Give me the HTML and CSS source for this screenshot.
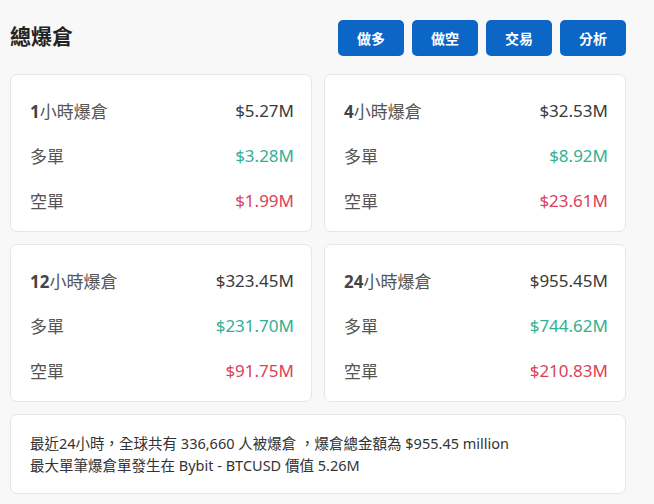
FILE: index.html
```html
<!DOCTYPE html>
<html lang="zh-Hant">
<head>
<meta charset="utf-8">
<link rel="stylesheet" href="styles.css">
</head>
<body>
<div class="page">
  <header class="head">
    <h1 class="title">總爆倉</h1>
    <nav class="actions">
      <button class="btn">做多</button>
      <button class="btn">做空</button>
      <button class="btn">交易</button>
      <button class="btn">分析</button>
    </nav>
  </header>
  <section class="grid">
    <div class="card">
      <div class="row"><span class="label"><b>1</b>小時爆倉</span><span class="val">$5.27M</span></div>
      <div class="row"><span class="label">多單</span><span class="val up">$3.28M</span></div>
      <div class="row"><span class="label">空單</span><span class="val down">$1.99M</span></div>
    </div>
    <div class="card">
      <div class="row"><span class="label"><b>4</b>小時爆倉</span><span class="val">$32.53M</span></div>
      <div class="row"><span class="label">多單</span><span class="val up">$8.92M</span></div>
      <div class="row"><span class="label">空單</span><span class="val down">$23.61M</span></div>
    </div>
    <div class="card">
      <div class="row"><span class="label"><b>12</b>小時爆倉</span><span class="val">$323.45M</span></div>
      <div class="row"><span class="label">多單</span><span class="val up">$231.70M</span></div>
      <div class="row"><span class="label">空單</span><span class="val down">$91.75M</span></div>
    </div>
    <div class="card">
      <div class="row"><span class="label"><b>24</b>小時爆倉</span><span class="val">$955.45M</span></div>
      <div class="row"><span class="label">多單</span><span class="val up">$744.62M</span></div>
      <div class="row"><span class="label">空單</span><span class="val down">$210.83M</span></div>
    </div>
  </section>
  <section class="summary">
    <p>最近24小時，全球共有 336,660 人被爆倉 ，爆倉總金額為 $955.45 million</p>
    <p>最大單筆爆倉單發生在 Bybit - BTCUSD 價值 5.26M</p>
  </section>
</div>
</body>
</html>
```
FILE: styles.css
```css
* { box-sizing: border-box; }
html, body { margin: 0; padding: 0; background: #f8f8f8; }
body {
  font-family: "Noto Sans", "Noto Sans CJK TC", sans-serif;
  color: #333;
}
.page {
  width: 626px;
  padding: 20px 0 0 10px;
}
.head {
  display: flex;
  align-items: flex-start;
  justify-content: space-between;
  height: 36px;
  margin-bottom: 18px;
}
.title {
  margin: 0;
  font-size: 21px;
  line-height: 32px;
  font-weight: 700;
  color: #222;
}
.actions { display: flex; gap: 8px; }
.btn {
  width: 66px;
  height: 36px;
  border: none;
  border-radius: 5px;
  background: #0b66c6;
  color: #fff;
  font-family: inherit;
  font-size: 14px;
  font-weight: 700;
  padding: 0;
}
.grid {
  display: grid;
  grid-template-columns: 302px 302px;
  gap: 12px;
  width: 616px;
}
.card {
  background: #fff;
  border: 1px solid #e6e6e6;
  border-radius: 7px;
  height: 158px;
  padding: 13px 17px 0 19px;
  display: flex;
  flex-direction: column;
}
.row {
  display: flex;
  justify-content: space-between;
  align-items: center;
  height: 45px;
  font-size: 17px;
}
.label { color: #555; }
.label b { font-weight: 700; color: #444; }
.val { color: #3a3a3a; }
.up { color: #33b091; }
.down { color: #dc4157; }
.summary {
  margin-top: 12px;
  width: 616px;
  height: 80px;
  background: #fff;
  border: 1px solid #e6e6e6;
  border-radius: 7px;
  padding: 17px 19px;
  font-size: 14.5px;
  color: #333;
}
.summary p { margin: 0; line-height: 22px; }
```
